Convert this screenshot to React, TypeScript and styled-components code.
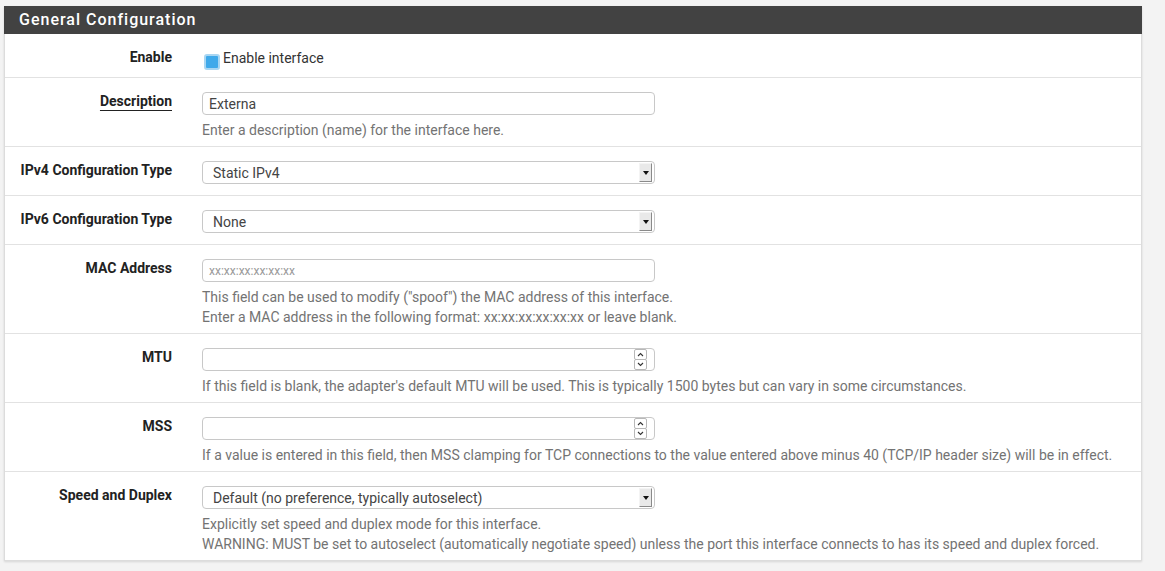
import React from "react";
import styled, { createGlobalStyle } from "styled-components";

const GlobalStyle = createGlobalStyle`
  html, body {
    margin: 0;
    padding: 0;
    background: #f3f3f3;
    font-family: Roboto, "Liberation Sans", sans-serif;
    font-size: 14px;
    color: #333;
  }
`;

const Page = styled.div`
  padding: 6px 23px 10px 4px;
`;

const Panel = styled.div`
  background: #fff;
  border: 1px solid #dcdcdc;
  border-top: none;
  box-shadow: 0 1px 2px rgba(0, 0, 0, 0.12);
`;

const Heading = styled.div`
  background: #424242;
  color: #fff;
  height: 28px;
  line-height: 27px;
  padding-left: 15px;
  font-size: 16px;
  font-weight: 500;
  letter-spacing: 1px;
  margin: 0 -1px;
`;

const Row = styled.div<{ $tight?: boolean }>`
  display: grid;
  grid-template-columns: 182px 1fr;
  padding: 13px 0 11px;
  height: ${(p) => (p.$tight ? "19px" : "auto")};
  & + & {
    border-top: 1px solid #e2e2e2;
  }
`;

const Label = styled.div<{ $underline?: boolean }>`
  text-align: right;
  padding-right: 15px;
  font-weight: 700;
  color: #222;
  line-height: 20px;
  span {
    text-decoration: ${(p) => (p.$underline ? "underline" : "none")};
    text-underline-offset: 4px;
  }
`;

const Field = styled.div`
  padding: 1px 15px 0;
`;

const Help = styled.div`
  color: #737373;
  line-height: 20px;
  margin: 5px 0 -5px;
`;

const CheckLine = styled.label`
  display: flex;
  align-items: flex-start;
  line-height: 20px;
  height: 18px;
  color: #333;
`;

const Check = styled.span`
  display: inline-block;
  width: 12px;
  height: 12px;
  margin: 6px 3px 0 2px;
  background: #3fa9ea;
  border: 2px solid #a9d6f2;
  border-radius: 3px;
`;

const Box = styled.div`
  width: 453px;
  height: 23px;
  box-sizing: border-box;
  border: 1px solid #c8c8c8;
  border-radius: 4px;
  display: flex;
  align-items: center;
  background: #fff;
`;

const BoxText = styled.span<{ $placeholder?: boolean; $pad?: number }>`
  flex: 1;
  padding-left: ${(p) => p.$pad ?? 6}px;
  color: ${(p) => (p.$placeholder ? "#9a9a9a" : "#444")};
  font-size: ${(p) => (p.$placeholder ? "12px" : "14px")};
  white-space: nowrap;
`;

const Arrow = styled.span`
  width: 13px;
  height: 19px;
  margin-right: 2px;
  box-sizing: border-box;
  background: #e9e9e9;
  border-right: 1px solid #8a8a8a;
  border-bottom: 1px solid #8a8a8a;
  border-left: 1px solid #f4f4f4;
  border-top: 1px solid #f4f4f4;
  display: flex;
  align-items: center;
  justify-content: center;
  &::after {
    content: "";
    border-left: 3px solid transparent;
    border-right: 3px solid transparent;
    border-top: 4px solid #111;
  }
`;

const Spin = styled.span`
  display: flex;
  flex-direction: column;
  margin-right: 7px;
`;

const SpinButton = styled.span`
  width: 11px;
  height: 9px;
  border: 1px solid #b8b8b8;
  border-radius: 2px;
  display: flex;
  align-items: center;
  justify-content: center;
  & + & {
    margin-top: -1px;
  }
  svg {
    display: block;
  }
`;

function TextField({ value, placeholder }: { value?: string; placeholder?: string }) {
  return (
    <Box>
      <BoxText $placeholder={!value}>{value || placeholder}</BoxText>
    </Box>
  );
}

function SelectField({ value }: { value: string }) {
  return (
    <Box>
      <BoxText $pad={10}>{value}</BoxText>
      <Arrow />
    </Box>
  );
}

function NumberField() {
  return (
    <Box>
      <BoxText />
      <Spin>
        <SpinButton>
          <svg width="7" height="5" viewBox="0 0 7 5">
            <path d="M1 4 L3.5 1.5 L6 4" fill="none" stroke="#333" strokeWidth="1.1" />
          </svg>
        </SpinButton>
        <SpinButton>
          <svg width="7" height="5" viewBox="0 0 7 5">
            <path d="M1 1 L3.5 3.5 L6 1" fill="none" stroke="#333" strokeWidth="1.1" />
          </svg>
        </SpinButton>
      </Spin>
    </Box>
  );
}

export default function App() {
  return (
    <Page>
      <GlobalStyle />
      <Panel>
        <Heading>General Configuration</Heading>
        <Row $tight>
          <Label>
            <span>Enable</span>
          </Label>
          <Field>
            <CheckLine>
              <Check />
              Enable interface
            </CheckLine>
          </Field>
        </Row>
        <Row>
          <Label $underline>
            <span>Description</span>
          </Label>
          <Field>
            <TextField value="Externa" />
            <Help>Enter a description (name) for the interface here.</Help>
          </Field>
        </Row>
        <Row>
          <Label>
            <span>IPv4 Configuration Type</span>
          </Label>
          <Field>
            <SelectField value="Static IPv4" />
          </Field>
        </Row>
        <Row>
          <Label>
            <span>IPv6 Configuration Type</span>
          </Label>
          <Field>
            <SelectField value="None" />
          </Field>
        </Row>
        <Row>
          <Label>
            <span>MAC Address</span>
          </Label>
          <Field>
            <TextField placeholder="xx:xx:xx:xx:xx:xx" />
            <Help>
              This field can be used to modify ("spoof") the MAC address of this interface.
              <br />
              Enter a MAC address in the following format: xx:xx:xx:xx:xx:xx or leave blank.
            </Help>
          </Field>
        </Row>
        <Row>
          <Label>
            <span>MTU</span>
          </Label>
          <Field>
            <NumberField />
            <Help>
              If this field is blank, the adapter's default MTU will be used. This is typically 1500 bytes but can vary in some circumstances.
            </Help>
          </Field>
        </Row>
        <Row>
          <Label>
            <span>MSS</span>
          </Label>
          <Field>
            <NumberField />
            <Help>
              If a value is entered in this field, then MSS clamping for TCP connections to the value entered above minus 40 (TCP/IP header size) will be in effect.
            </Help>
          </Field>
        </Row>
        <Row>
          <Label>
            <span>Speed and Duplex</span>
          </Label>
          <Field>
            <SelectField value="Default (no preference, typically autoselect)" />
            <Help>
              Explicitly set speed and duplex mode for this interface.
              <br />
              WARNING: MUST be set to autoselect (automatically negotiate speed) unless the port this interface connects to has its speed and duplex forced.
            </Help>
          </Field>
        </Row>
      </Panel>
    </Page>
  );
}
